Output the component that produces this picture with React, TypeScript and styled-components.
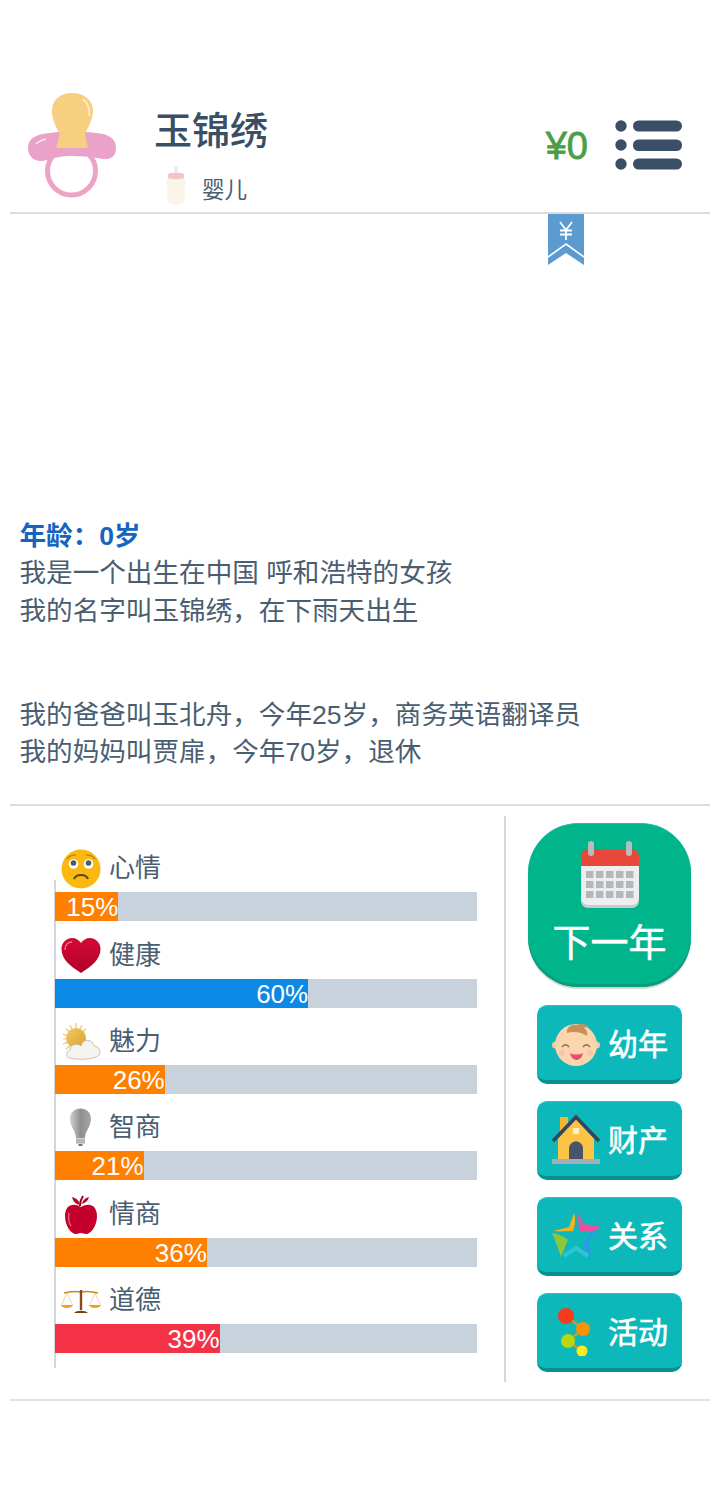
import React from "react";
import styled, { createGlobalStyle } from "styled-components";

const GlobalStyle = createGlobalStyle`
  html, body {
    margin: 0;
    padding: 0;
    background: #fff;
  }
  body {
    font-family: "Liberation Sans", "Noto Sans CJK SC", sans-serif;
    color: #4a5e72;
  }
`;

const Page = styled.div`
  width: 720px;
  height: 1496px;
  box-sizing: border-box;
  padding: 90px 10px 0;
  overflow: hidden;
`;

const Header = styled.header`
  display: flex;
  align-items: flex-start;
  height: 122px;
  padding-left: 17px;
  border-bottom: 2px solid #dcdcdc;
`;

const Avatar = styled.div`
  width: 90px;
  height: 110px;
  flex: none;
`;

const Identity = styled.div`
  margin-left: 37px;
  flex: 1;
`;

const Name = styled.h1`
  margin: 17px 0 0;
  font-size: 38px;
  line-height: 48px;
  font-weight: 500;
  color: #3a4f64;
`;

const Stage = styled.div`
  display: flex;
  align-items: center;
  margin: 4px 0 0 11px;
  font-size: 22.5px;
  line-height: 40px;
  color: #4a5e72;
`;

const StageLabel = styled.span`
  margin-left: 15px;
  padding-top: 12px;
`;

const Money = styled.div`
  margin: 34px 27px 0 0;
  font-size: 38px;
  line-height: 44px;
  color: #4b9d47;
  -webkit-text-stroke: 0.8px #4b9d47;
`;

const MenuButton = styled.div`
  width: 67px;
  height: 50px;
  margin: 30px 28px 0 0;
  flex: none;
`;

const AdSlot = styled.div`
  height: 302px;
  padding-left: 538px;
`;

const Log = styled.section`
  height: 286.5px;
  padding: 1.5px 0 0 9.5px;
  font-size: 26.6px;
  line-height: 37.5px;
  border-bottom: 2px solid #dcdcdc;
`;

const LogEntry = styled.p`
  margin: 0 0 66.5px;
`;

const AgeLine = styled.strong`
  display: block;
  color: #1565c0;
  font-weight: 700;
`;

const Dashboard = styled.section`
  display: flex;
  height: 595px;
  box-sizing: border-box;
  padding-top: 10px;
  border-bottom: 2px solid #e2e2e2;
`;

const StatsPanel = styled.div`
  position: relative;
  width: 496px;
  height: 566px;
  box-sizing: border-box;
  padding: 32.3px 0 0 45px;
  border-right: 2px solid #d8d8d8;

  &::before {
    content: "";
    position: absolute;
    left: 44px;
    top: 64px;
    width: 2px;
    height: 488px;
    background: #d4d6d8;
  }
`;

const StatRow = styled.div`
  position: relative;
  width: 422px;
  margin-bottom: 13.4px;
`;

const StatHead = styled.div`
  display: flex;
  align-items: center;
  height: 44px;
  font-size: 26px;
  line-height: 38px;
`;

const StatIcon = styled.div`
  width: 40px;
  height: 40px;
  margin: -2px 9px 0 6px;
  flex: none;
`;

const StatLabel = styled.span`
  margin-left: -1px;
  padding-bottom: 4px;
`;

const Track = styled.div`
  height: 29px;
  background: #c8d2dc;
`;

const Fill = styled.div<{ $color: string }>`
  height: 100%;
  background: ${(p) => p.$color};
  color: #fff;
  font-size: 26px;
  line-height: 30px;
  text-align: right;
`;

const Actions = styled.div`
  display: flex;
  flex-direction: column;
  align-items: flex-start;
  padding: 0 0 0 22px;
`;

const NextButton = styled.div`
  display: flex;
  flex-direction: column;
  align-items: center;
  width: 163px;
  height: 164px;
  margin-top: 7px;
  box-sizing: border-box;
  padding-top: 16px;
  border-radius: 50px;
  background: #00b48c;
  border-top: 1px solid #1fc09c;
  box-shadow: inset 0 -3px 0 #0a9c7b, 0 2px 1px #d2d8d6;
  color: #fff;
  font-size: 38px;
  line-height: 48px;
  -webkit-text-stroke: 0.5px #fff;
`;

const NextIcon = styled.div`
  width: 62px;
  height: 70px;
  margin-bottom: 9px;
`;

const ActionButton = styled.div`
  display: flex;
  align-items: center;
  width: 145px;
  height: 79px;
  margin: 18px 0 0 9px;
  box-sizing: border-box;
  padding-left: 14px;
  border-radius: 10px;
  background: #0cb8ba;
  border-top: 1px solid #29c4c6;
  border-bottom: 4px solid #078f92;
  color: #fff;
  font-size: 30px;
  -webkit-text-stroke: 0.6px #fff;
  & + & {
    margin-top: 17px;
  }
`;

const ActionIcon = styled.div`
  width: 50px;
  height: 50px;
  margin-right: 7px;
  flex: none;
`;

const ActionLabel = styled.span`
  padding-bottom: 3px;
`;

const Pacifier = () => (
  <svg width="90" height="110" viewBox="0 0 90 110">
    <circle cx="44.5" cy="81" r="24" fill="none" stroke="#eda3c7" strokeWidth="5" />
    <path d="M1 58 C1 50 6 46 16 44 C22 43 27 42 32 42 L58 42 C64 42 70 43 76 44 C84 46 89 50 89 58 C89 66 84 70 76 69 C66 67 56 66 45 66 C34 66 26 68 16 71 C7 72 1 66 1 58Z" fill="#eba2c8" />
    <path d="M29 58 L33 44 C27 34 25 27 25 21 C25 10 33 3 45 3 C57 3 66 10 66 21 C66 27 63 34 58 44 L61 58Z" fill="#f6cf80" />
    <path d="M56 9 C61 13 63 19 62 26" fill="none" stroke="#fdf0d4" strokeWidth="1.6" />
    <path d="M9 54 C12 51 15 50 19 49" fill="none" stroke="#fbe3f0" strokeWidth="1.6" />
  </svg>
);

const Bottle = () => (
  <svg width="22" height="40" viewBox="0 0 22 40" style={{ flex: "none" }}>
    <path d="M9 8 L10 1 L12 1 L13 8Z" fill="#efe6e0" />
    <rect x="3" y="8" width="16" height="6" rx="2.5" fill="#f4c4c4" />
    <path d="M3 14 H19 C20 19 19 22 19 27 C19 32 20 35 18 37 C16 39 6 39 4 37 C2 35 3 32 3 27 C3 22 2 19 3 14Z" fill="#fbf5ea" stroke="#eee7dc" strokeWidth="0.6" />
  </svg>
);

const MenuIcon = () => (
  <svg width="67" height="50" viewBox="0 0 67 50" fill="#3a4f66">
    <circle cx="6" cy="6" r="5.7" />
    <circle cx="6" cy="25" r="5.7" />
    <circle cx="6" cy="44" r="5.7" />
    <rect x="18" y="0.5" width="49" height="11" rx="5.5" />
    <rect x="18" y="19.5" width="49" height="11.5" rx="5.5" />
    <rect x="18" y="38.5" width="49" height="11" rx="5.5" />
  </svg>
);

const Ribbon = () => (
  <svg width="36" height="52" viewBox="0 0 36 52" style={{ display: "block" }}>
    <path d="M0 0 H36 V51 L18 39 L0 51Z" fill="#5b9bd0" />
    <path d="M0 43 L18 30 L36 43" fill="none" stroke="#fff" strokeWidth="1.6" />
    <path d="M12 8 L18 16 L24 8 M18 16 V26 M12 16.5 H24 M12 20.5 H24" fill="none" stroke="#fff" strokeWidth="1.8" />
  </svg>
);

const FaceIcon = () => (
  <svg width="40" height="40" viewBox="0 0 40 40">
    <circle cx="20" cy="20" r="19.5" fill="#fbb80f" />
    <circle cx="12.5" cy="15" r="4.8" fill="#fff" />
    <circle cx="27.5" cy="15" r="4.8" fill="#fff" />
    <circle cx="12.5" cy="14" r="2.8" fill="#4a5a66" />
    <circle cx="27.5" cy="14" r="2.8" fill="#4a5a66" />
    <path d="M6 10 C8 7 11 6 15 6 M34 10 C32 7 29 6 25 6" fill="none" stroke="#a87a10" strokeWidth="1.2" />
    <path d="M13 30 C15 24.5 25 24.5 27 30" fill="none" stroke="#5a4420" strokeWidth="2" />
  </svg>
);

const HeartIcon = () => (
  <svg width="40" height="40" viewBox="0 0 40 40">
    <defs>
      <linearGradient id="heartFill" x1="0" y1="0" x2="0" y2="1">
        <stop offset="0" stopColor="#d40a36" />
        <stop offset="1" stopColor="#b00028" />
      </linearGradient>
    </defs>
    <path d="M20 37 C9 30 0.5 23 0.5 13 C0.5 6 6 2 11 2 C15 2 18 4 20 7 C22 4 25 2 29 2 C34 2 39.5 6 39.5 13 C39.5 23 31 30 20 37Z" fill="url(#heartFill)" />
    <path d="M4 14 C4 9 7 6 11 6" fill="none" stroke="#ee6c85" strokeWidth="1.6" />
  </svg>
);

const WeatherIcon = () => (
  <svg width="40" height="40" viewBox="0 0 40 40">
    <defs>
      <linearGradient id="sunFill" x1="0" y1="0" x2="1" y2="1">
        <stop offset="0" stopColor="#f2cb62" />
        <stop offset="1" stopColor="#d9a02c" />
      </linearGradient>
    </defs>
    <path d="M15 1 V6 M15 28 V33 M2 17 H6 M5 7 L9 10 M25 7 L21 10 M5 27 L9 24 M9 3 L11 7 M21 3 L19 7 M2 12 L7 14 M2 22 L7 20" stroke="#e8c56a" strokeWidth="1.2" />
    <circle cx="15" cy="16" r="10" fill="url(#sunFill)" />
    <path d="M9 36 C4 36 5 29 9 28 C9 22 17 21 20 24 C22 16 32 17 33 24 C39 24 41 32 37 34 C30 38 17 38 9 36Z" fill="#f6f3ee" stroke="#b9b4ac" strokeWidth="0.8" />
  </svg>
);

const BulbIcon = () => (
  <svg width="40" height="40" viewBox="0 0 40 40">
    <defs>
      <linearGradient id="bulbGlass" x1="0" x2="1">
        <stop offset="0" stopColor="#d0d0d0" />
        <stop offset="0.5" stopColor="#8f8f8f" />
        <stop offset="1" stopColor="#a6a6a6" />
      </linearGradient>
    </defs>
    <path d="M15 30 C15 23 9 19 9 11 C9 4 14 0.5 19.5 0.5 C25 0.5 30 4 30 11 C30 19 24 23 24 30Z" fill="url(#bulbGlass)" />
    <rect x="15" y="30" width="9" height="6" fill="#cfd1d2" />
    <path d="M15 32 H24 M15 34 H24" stroke="#8f9193" strokeWidth="0.8" />
    <rect x="17.5" y="36" width="4" height="2" fill="#777" />
  </svg>
);

const AppleIcon = () => (
  <svg width="40" height="40" viewBox="0 0 40 40">
    <path d="M20 12 C12 7 4 10 4 21 C4 31 10 39 15 39 C17 39 18 38 20 38 C22 38 23 39 25 39 C30 39 36 31 36 21 C36 10 28 7 20 12Z" fill="#c4002c" />
    <path d="M19 11 C19 7 20 4 22 1" fill="none" stroke="#8a0a20" strokeWidth="2" />
    <path d="M19 10 C14 9 12 6 11 2 C15 3 18 5 19 10Z M21 9 C24 8 27 6 28 2 C24 3 22 5 21 9Z" fill="#b00a28" />
    <path d="M8 18 C7 23 8 28 10 31" fill="none" stroke="#e8607c" strokeWidth="1.4" />
  </svg>
);

const ScalesIcon = () => (
  <svg width="40" height="40" viewBox="0 0 40 40">
    <path d="M3 12 C10 10 14 10 20 11 C26 10 30 10 37 12" fill="none" stroke="#c98a1e" strokeWidth="1.4" />
    <path d="M20 9 V29" stroke="#8a4a1a" strokeWidth="2.4" />
    <path d="M13 32 C16 29 24 29 27 32Z" fill="#7a3a14" />
    <path d="M6 12 L0.5 24 M6 12 L11.5 24 M34 12 L28.5 24 M34 12 L39.5 24" stroke="#d8a860" strokeWidth="0.5" />
    <path d="M0 24 H12 C11 28 1 28 0 24Z M28 24 H40 C39 28 29 28 28 24Z" fill="#eda21e" />
  </svg>
);

const CalendarIcon = () => (
  <svg width="62" height="70" viewBox="0 0 62 70">
    <rect x="2" y="48" width="58" height="20" rx="7" fill="#c9cdd0" />
    <path d="M2 26 H60 V57 C60 62 57 65 52 65 H10 C5 65 2 62 2 57Z" fill="#eceeef" />
    <path d="M10 9 H52 C57 9 60 12 60 17 V26 H2 V17 C2 12 5 9 10 9Z" fill="#e8483a" />
    <rect x="9" y="1" width="6" height="15" rx="3" fill="#b9bcbc" />
    <rect x="47" y="1" width="6" height="15" rx="3" fill="#b9bcbc" />
    {[31, 41, 51].map((y) =>
      [7, 17, 27, 37, 47].map((x) => (
        <rect key={`${x}-${y}`} x={x} y={y} width="7.5" height="7" fill="#b5b7b9" />
      ))
    )}
  </svg>
);

const BabyIcon = () => (
  <svg width="50" height="50" viewBox="0 0 50 50">
    <circle cx="4.5" cy="27" r="3.5" fill="#f4c9a0" />
    <circle cx="45.5" cy="27" r="3.5" fill="#f4c9a0" />
    <circle cx="25" cy="27" r="21" fill="#fbd5ae" />
    <path d="M16 15 C15 9 21 6 26 7 C30 5 34 6 38 8 L33 10 C36 12 37 15 36 18 C31 14 22 13 16 15Z" fill="#c6905c" />
    <path d="M11 29 C13 26 16 26 18 29 M32 29 C34 26 37 26 39 29" fill="none" stroke="#8a6a4a" strokeWidth="1.4" />
    <path d="M19 35 C22 37 28 37 32 35 C31 40 28 42 25.5 42 C23 42 20 40 19 35Z" fill="#e8506c" />
    <circle cx="11" cy="35" r="3" fill="#f8c4ae" />
    <circle cx="39" cy="35" r="3" fill="#f8c4ae" />
  </svg>
);

const HouseIcon = () => (
  <svg width="50" height="50" viewBox="0 0 50 50">
    <rect x="9" y="3" width="8" height="16" fill="#f2b632" />
    <path d="M7 25 L25 5 L43 25 V46 H7Z" fill="#fcc447" />
    <path d="M2 27 L25 3 L48 27" fill="none" stroke="#36455a" strokeWidth="3.6" />
    <path d="M18 46 V35 C18 25 32 25 32 35 V46Z" fill="#45566b" />
    <rect x="22" y="14" width="6" height="6" fill="#fdf0c8" />
    <rect x="1" y="45" width="48" height="5" fill="#9eb0bd" />
  </svg>
);

const StarIcon = () => (
  <svg width="50" height="50" viewBox="0 0 50 50">
    <path d="M2 21 L18 17 L23 3 C25 10 24 16 22 21 C15 21 8 22 2 21Z" fill="#f5b21e" />
    <path d="M26 3 C28 4 29 6 32 14 L48 16 C48 19 46 20 42 21 C36 22 32 22 28 21 C28 14 27 8 26 3Z" fill="#ee4ea0" />
    <path d="M48 18 L37 30 L40 47 C38 46 36 44 32 40 C32 33 36 24 48 18Z" fill="#2e98e8" />
    <path d="M13 46 L25 38 L37 46" fill="none" stroke="#2fc4d4" strokeWidth="4" />
    <path d="M1 23 C8 24 14 27 17 30 L10 47 C7 38 4 30 1 23Z" fill="#8cc63f" />
  </svg>
);

const DotsIcon = () => (
  <svg width="50" height="50" viewBox="0 0 50 50">
    <path d="M15 10 L32 23 L17 35 L31 45" fill="none" stroke="#c79a2a" strokeWidth="2.5" />
    <circle cx="15" cy="10" r="8" fill="#f43b1e" />
    <circle cx="32" cy="23" r="7" fill="#fb9200" />
    <circle cx="17" cy="35" r="7" fill="#b7d80c" />
    <circle cx="31" cy="45" r="5.5" fill="#fdec1f" />
  </svg>
);

const stats = [
  { label: "心情", value: 15, color: "#ff8000", icon: <FaceIcon /> },
  { label: "健康", value: 60, color: "#0b89e6", icon: <HeartIcon /> },
  { label: "魅力", value: 26, color: "#ff8000", icon: <WeatherIcon /> },
  { label: "智商", value: 21, color: "#ff8000", icon: <BulbIcon /> },
  { label: "情商", value: 36, color: "#ff8000", icon: <AppleIcon /> },
  { label: "道德", value: 39, color: "#f43246", icon: <ScalesIcon /> },
];

const actions = [
  { label: "幼年", icon: <BabyIcon /> },
  { label: "财产", icon: <HouseIcon /> },
  { label: "关系", icon: <StarIcon /> },
  { label: "活动", icon: <DotsIcon /> },
];

export default function App() {
  return (
    <Page>
      <GlobalStyle />
      <Header>
        <Avatar>
          <Pacifier />
        </Avatar>
        <Identity>
          <Name>玉锦绣</Name>
          <Stage>
            <Bottle />
            <StageLabel>婴儿</StageLabel>
          </Stage>
        </Identity>
        <Money>¥0</Money>
        <MenuButton>
          <MenuIcon />
        </MenuButton>
      </Header>

      <AdSlot>
        <Ribbon />
      </AdSlot>

      <Log>
        <LogEntry>
          <AgeLine>年龄：0岁</AgeLine>
          我是一个出生在中国 呼和浩特的女孩
          <br />
          我的名字叫玉锦绣，在下雨天出生
        </LogEntry>
        <LogEntry>
          我的爸爸叫玉北舟，今年25岁，商务英语翻译员
          <br />
          我的妈妈叫贾扉，今年70岁，退休
        </LogEntry>
      </Log>

      <Dashboard>
        <StatsPanel>
          {stats.map((s) => (
            <StatRow key={s.label}>
              <StatHead>
                <StatIcon>{s.icon}</StatIcon>
                <StatLabel>{s.label}</StatLabel>
              </StatHead>
              <Track>
                <Fill $color={s.color} style={{ width: `${s.value}%` }}>
                  {s.value}%
                </Fill>
              </Track>
            </StatRow>
          ))}
        </StatsPanel>
        <Actions>
          <NextButton>
            <NextIcon>
              <CalendarIcon />
            </NextIcon>
            下一年
          </NextButton>
          {actions.map((a) => (
            <ActionButton key={a.label}>
              <ActionIcon>{a.icon}</ActionIcon>
              <ActionLabel>{a.label}</ActionLabel>
            </ActionButton>
          ))}
        </Actions>
      </Dashboard>
    </Page>
  );
}
